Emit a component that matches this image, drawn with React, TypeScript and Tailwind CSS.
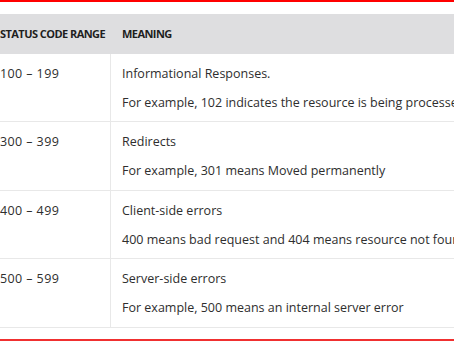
import React from "react";

const rows = [
  { range: "100 – 199", title: "Informational Responses.", desc: "For example, 102 indicates the resource is being processed" },
  { range: "300 – 399", title: "Redirects", desc: "For example, 301 means Moved permanently" },
  { range: "400 – 499", title: "Client-side errors", desc: "400 means bad request and 404 means resource not found" },
  { range: "500 – 599", title: "Server-side errors", desc: "For example, 500 means an internal server error" },
];

export default function App() {
  return (
    <div
      className="w-[454px] h-[341px] overflow-hidden bg-white text-[#2e2e2e] flex flex-col"
      style={{ fontFamily: '"Open Sans", "Noto Sans", sans-serif' }}
    >
      <div className="h-[2px] bg-[#ff0000] shrink-0" />
      <div className="h-[12px] shrink-0" />
      <div className="ml-[-12px] w-[640px] shrink-0">
        <div className="grid grid-cols-[123px_1fr] h-[40px] bg-[#dedee0] text-[11px] font-bold tracking-[-0.55px] text-[#1e1e1e] items-center">
          <div className="pl-[12px] whitespace-nowrap">STATUS CODE RANGE</div>
          <div className="pl-[11px]">MEANING</div>
        </div>
        {rows.map((r, i) => (
          <div
            key={r.range}
            className={`grid grid-cols-[123px_1fr] border-b border-[#e8e8e8] text-[12.5px] leading-[20px] ${i % 2 === 0 ? "h-[68px]" : "h-[69px]"}`}
          >
            <div className="pl-[12px] pt-[10px] border-r border-[#e8e8e8] whitespace-nowrap tracking-[0.4px]">{r.range}</div>
            <div className="pl-[11px] pt-[10px] flex flex-col gap-[9px] whitespace-nowrap">
              <p>{r.title}</p>
              <p>{r.desc}</p>
            </div>
          </div>
        ))}
      </div>
      <div className="h-[11px] shrink-0" />
      <div className="h-[2px] bg-[#f03030] shrink-0" />
    </div>
  );
}
